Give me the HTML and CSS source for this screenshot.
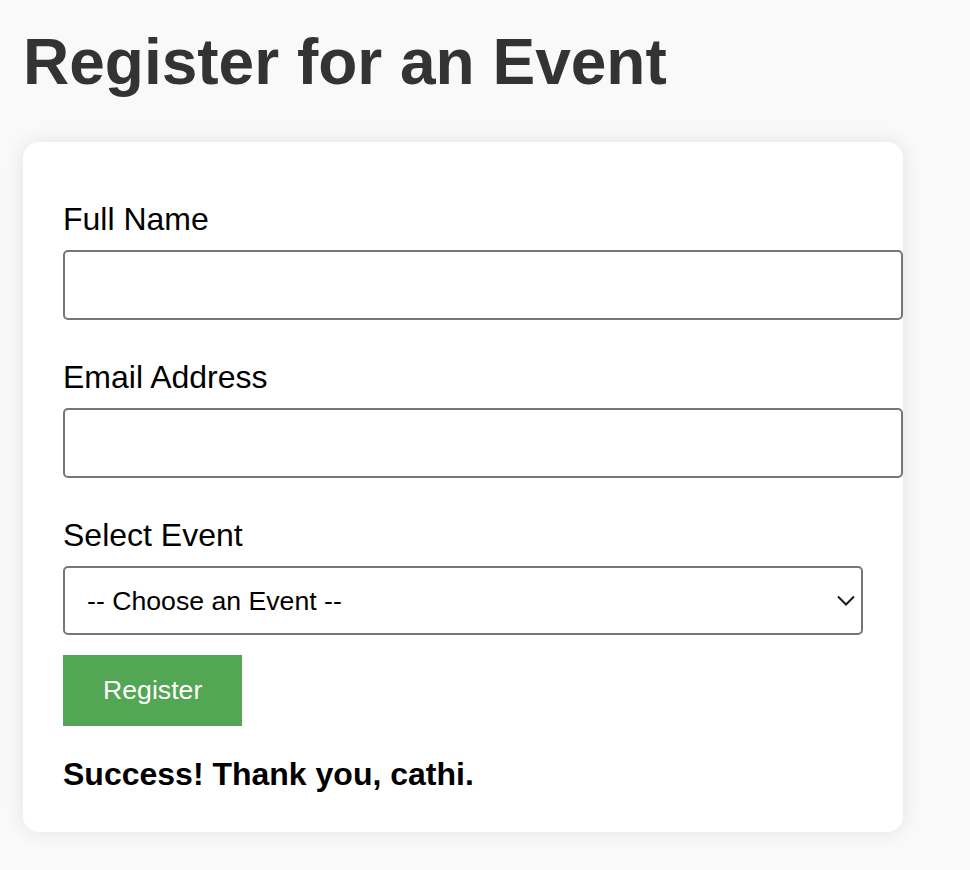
FILE: index.html
```html
<!DOCTYPE html>
<html lang="en">
<head>
<meta charset="utf-8">
<title>Register for an Event</title>
<link rel="stylesheet" href="styles.css">
</head>
<body>
  <h1 class="page-title">Register for an Event</h1>
  <div class="card">
    <form class="reg-form">
      <label class="field-label" for="name">Full Name</label>
      <input class="text-input" id="name" type="text">
      <label class="field-label" for="email">Email Address</label>
      <input class="text-input" id="email" type="email">
      <label class="field-label" for="event">Select Event</label>
      <div class="select-wrap">
        <select class="select-input" id="event">
          <option>-- Choose an Event --</option>
        </select>
        <svg class="select-arrow" width="18" height="11" viewBox="0 0 18 11" aria-hidden="true">
          <path d="M1 1.5 L9 9.5 L17 1.5" fill="none" stroke="#1a1a1a" stroke-width="2"/>
        </svg>
      </div>
      <button class="submit-btn" type="button">Register</button>
    </form>
    <p class="success">Success! Thank you, cathi.</p>
  </div>
</body>
</html>
```
FILE: styles.css
```css
html, body {
  margin: 0;
  background: #f9f9f9;
}
body {
  padding: 25px 23px;
  font-family: "Liberation Sans", Arial, sans-serif;
  color: #000;
}
.page-title {
  margin: 0 0 43px;
  font-size: 64px;
  font-weight: bold;
  color: #333;
  line-height: 74px;
}
.card {
  width: 800px;
  background: #fff;
  border-radius: 16px;
  padding: 59px 40px 39px;
  box-shadow: 0 0 20px rgba(0, 0, 0, 0.09);
}
.reg-form {
  display: flex;
  flex-direction: column;
  align-items: flex-start;
}
.field-label {
  display: block;
  font-size: 32px;
  line-height: 37px;
  margin-bottom: 12px;
}
.text-input {
  width: 800px;
  height: 30px;
  padding: 18px;
  border: 2px solid #767676;
  border-radius: 5px;
  font-family: "Liberation Sans", Arial, sans-serif;
  font-size: 26.67px;
  margin: 0 0 39px;
  background: #fff;
}
.select-wrap {
  position: relative;
  width: 800px;
  margin-bottom: 20px;
}
.select-input {
  appearance: none;
  -webkit-appearance: none;
  box-sizing: border-box;
  display: block;
  width: 800px;
  height: 69px;
  padding: 0 22px;
  border: 2px solid #767676;
  border-radius: 5px;
  background: #fff;
  color: #000;
  font-family: "Liberation Sans", Arial, sans-serif;
  font-size: 26.67px;
}
.select-arrow {
  position: absolute;
  right: 8px;
  top: 29px;
  pointer-events: none;
}
.submit-btn {
  border: none;
  background: #53a653;
  color: #fff;
  font-family: "Liberation Sans", Arial, sans-serif;
  font-size: 26.67px;
  line-height: 31px;
  padding: 20px 40px;
  margin: 0;
  cursor: pointer;
}
.success {
  margin: 30px 0 0;
  font-size: 32px;
  font-weight: bold;
  line-height: 37px;
}
```
